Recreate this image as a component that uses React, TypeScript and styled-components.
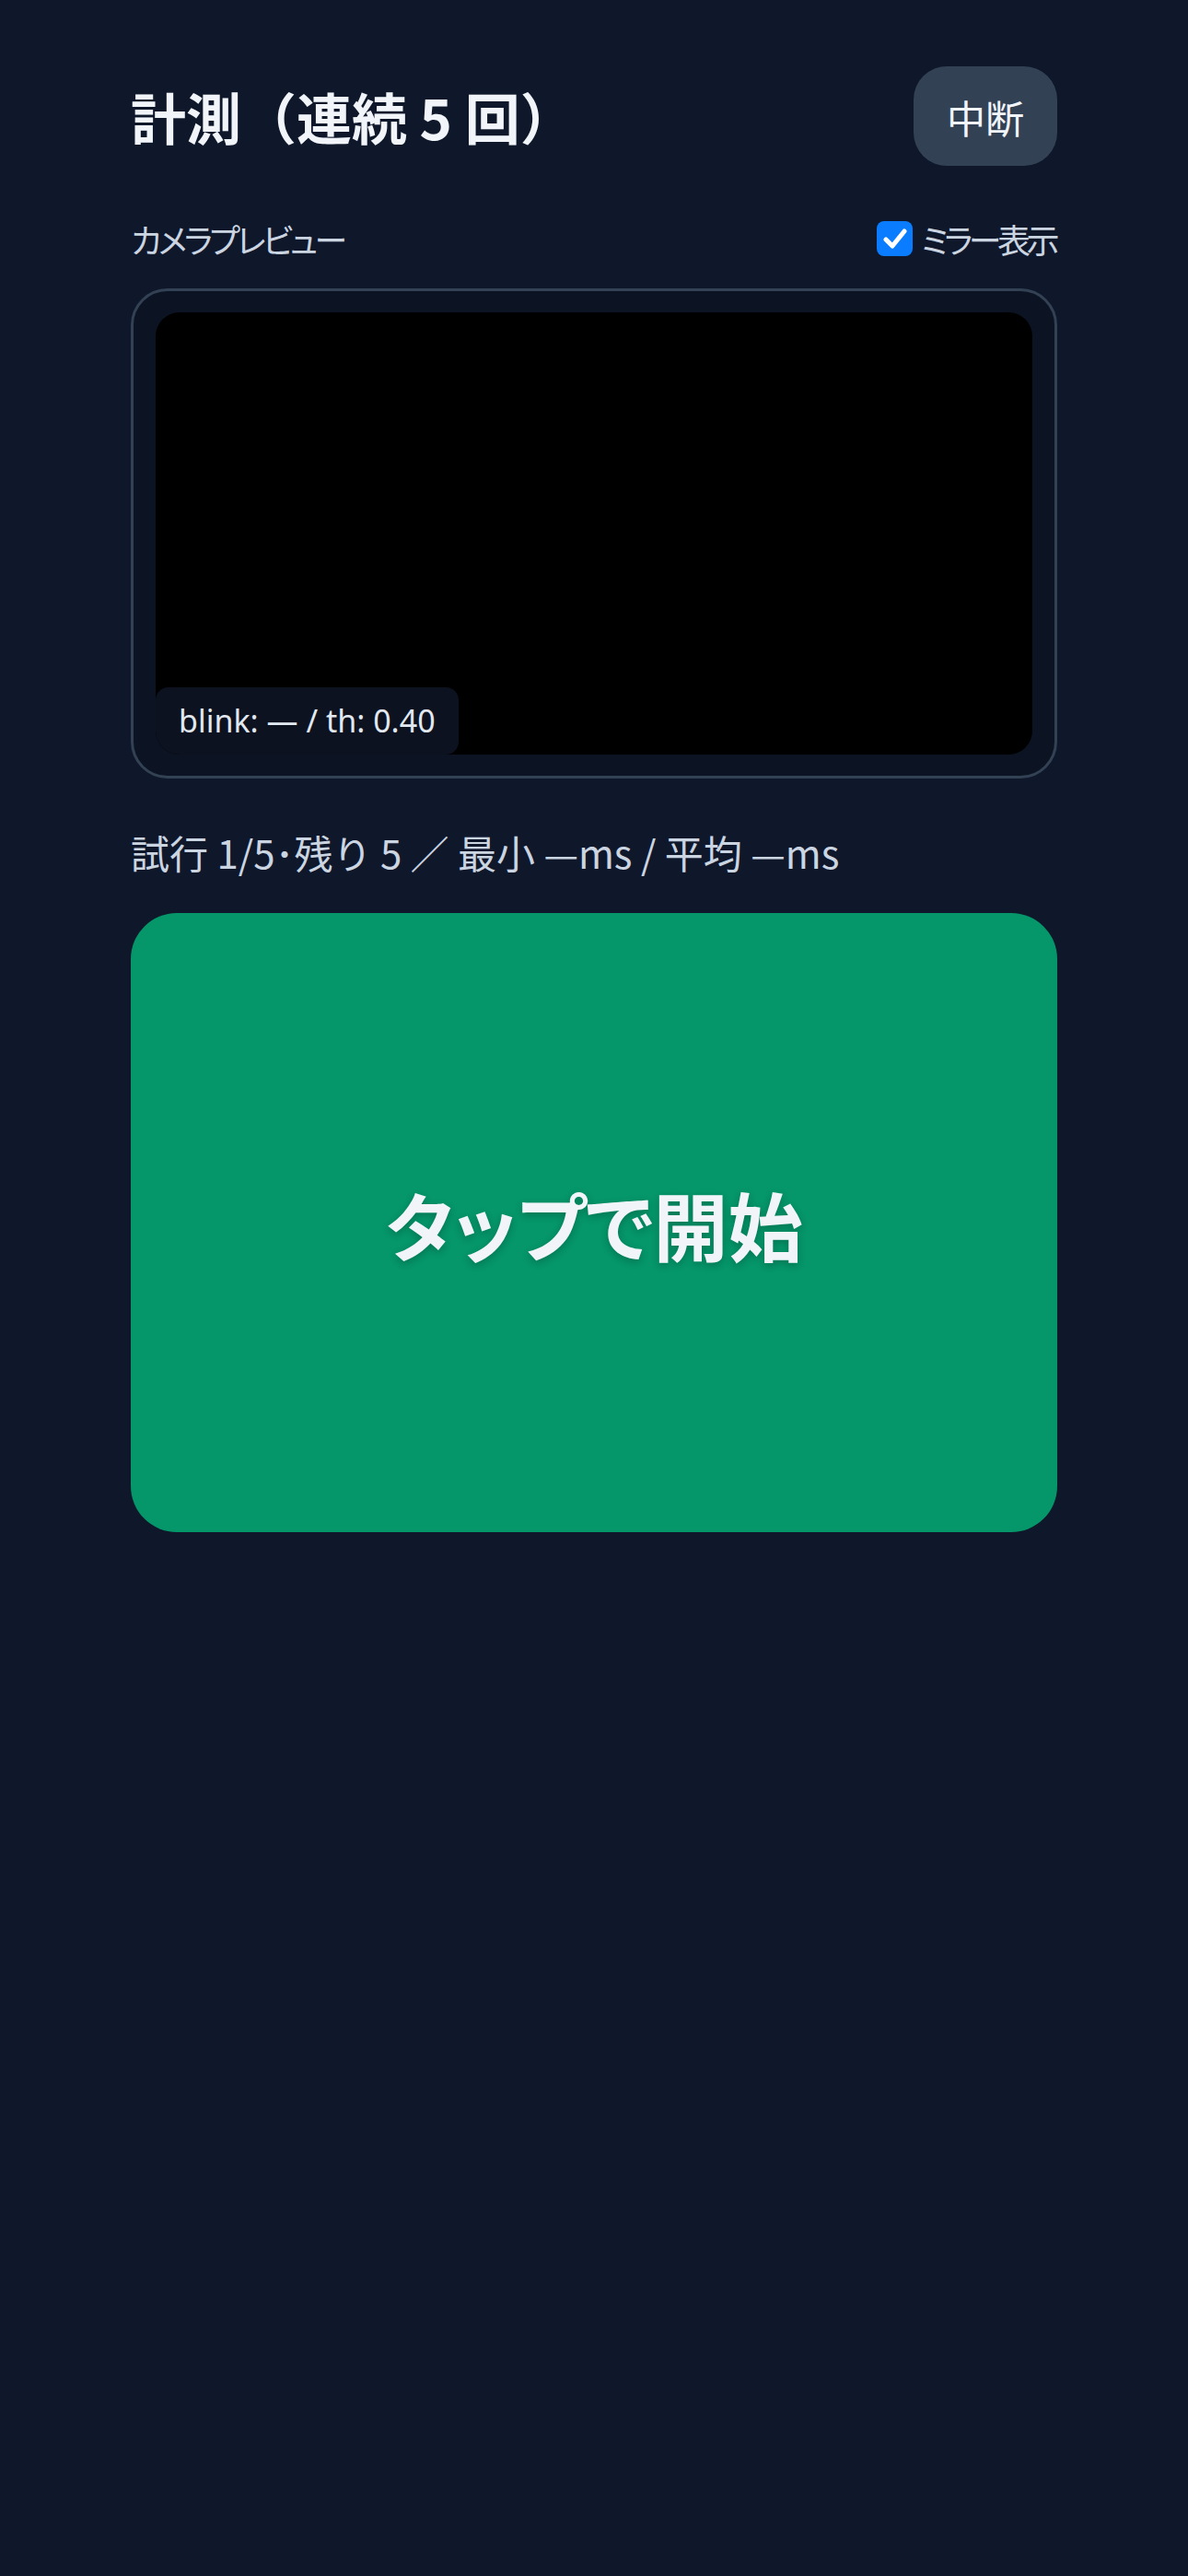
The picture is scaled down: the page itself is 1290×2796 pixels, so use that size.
import styled, { createGlobalStyle } from "styled-components";

const GlobalStyle = createGlobalStyle`
	html, body {
		margin: 0;
		padding: 0;
		background: #0f172a;
		min-height: 100%;
	}
	body {
		font-family: "Noto Sans", "Noto Sans CJK JP", sans-serif;
		color: #f1f5f9;
	}
`;

const Page = styled.div`
	min-height: 2796px;
	background: #0f172a;
`;

const Main = styled.main`
	width: 1006px;
	margin: 0 auto;
	padding-top: 72px;
	display: flex;
	flex-direction: column;
`;

const Header = styled.header`
	display: flex;
	justify-content: space-between;
	align-items: center;
	height: 108px;
`;

const Title = styled.h1`
	margin: 0;
	font-family: "Noto Sans CJK JP", sans-serif;
	font-size: 60px;
	font-weight: 700;
	color: #f1f5f9;
	line-height: 1;
`;

const AbortButton = styled.button`
	height: 108px;
	padding: 0 36px;
	border: none;
	border-radius: 36px;
	background: #334155;
	color: #f1f5f9;
	font-family: "Noto Sans CJK JP", sans-serif;
	font-size: 42px;
	cursor: pointer;
`;

const LabelRow = styled.div`
	display: flex;
	justify-content: space-between;
	align-items: center;
	height: 38px;
	margin-top: 60px;
`;

const Label = styled.span<{ $tight?: number }>`
	font-family: "Noto Sans CJK JP", sans-serif;
	font-feature-settings: "palt";
	font-size: 36px;
	color: #cbd5e1;
	letter-spacing: ${p => p.$tight ?? -3.5}px;
`;

const MirrorToggle = styled.label`
	display: flex;
	align-items: center;
	gap: 9px;
	padding-right: 2px;
	cursor: pointer;
`;

const CheckBox = styled.span<{ $checked: boolean }>`
	width: 39px;
	height: 38px;
	border-radius: 8px;
	background: ${p => (p.$checked ? "#0a7cff" : "transparent")};
	display: flex;
	align-items: center;
	justify-content: center;
`;

const PreviewBox = styled.div`
	margin-top: 35px;
	border: 3px solid #334155;
	border-radius: 40px;
	background: #0c1322;
	padding: 23px 24px;
`;

const Video = styled.div`
	position: relative;
	height: 480px;
	background: #000;
	border-radius: 26px;
	overflow: hidden;
`;

const Overlay = styled.div`
	position: absolute;
	left: 0;
	bottom: 0;
	padding: 12px 25px;
	background: #0c1220;
	border-radius: 14px;
	color: #e2e8f0;
	font-family: "Noto Sans", "Noto Sans CJK JP", sans-serif;
	font-size: 34px;
	line-height: 49px;
`;

const Stats = styled.p`
	margin: 48px 0 0;
	font-family: "Noto Sans CJK JP", sans-serif;
	font-size: 42px;
	line-height: 63px;
	color: #cbd5e1;
`;

const StartButton = styled.button`
	margin-top: 35px;
	height: 672px;
	border: none;
	border-radius: 50px;
	background: #059669;
	color: #f1f5f9;
	font-family: "Noto Sans CJK JP", sans-serif;
	font-feature-settings: "palt";
	font-size: 81px;
	font-weight: 700;
	text-shadow: 0 3px 8px rgba(0, 0, 0, 0.22);
	cursor: pointer;
`;

const App = () => {
	return (
		<Page>
			<GlobalStyle />
			<Main>
				<Header>
					<Title>計測（連続 5 回）</Title>
					<AbortButton>中断</AbortButton>
				</Header>
				<LabelRow>
					<Label>カメラプレビュー</Label>
					<MirrorToggle>
						<CheckBox $checked>
							<svg width="26" height="24" viewBox="0 0 26 24">
								<path
									d="M3 13 L10 20 L23 4"
									fill="none"
									stroke="#fff"
									strokeWidth="5"
									strokeLinecap="round"
									strokeLinejoin="round"
								/>
							</svg>
						</CheckBox>
						<Label $tight={-4.5}>ミラー表示</Label>
					</MirrorToggle>
				</LabelRow>
				<PreviewBox>
					<Video>
						<Overlay>blink: — / th: 0.40</Overlay>
					</Video>
				</PreviewBox>
				<Stats>試行 1/5･残り 5 ／ 最小 —ms / 平均 —ms</Stats>
				<StartButton>タップで開始</StartButton>
			</Main>
		</Page>
	);
};

export default App;
